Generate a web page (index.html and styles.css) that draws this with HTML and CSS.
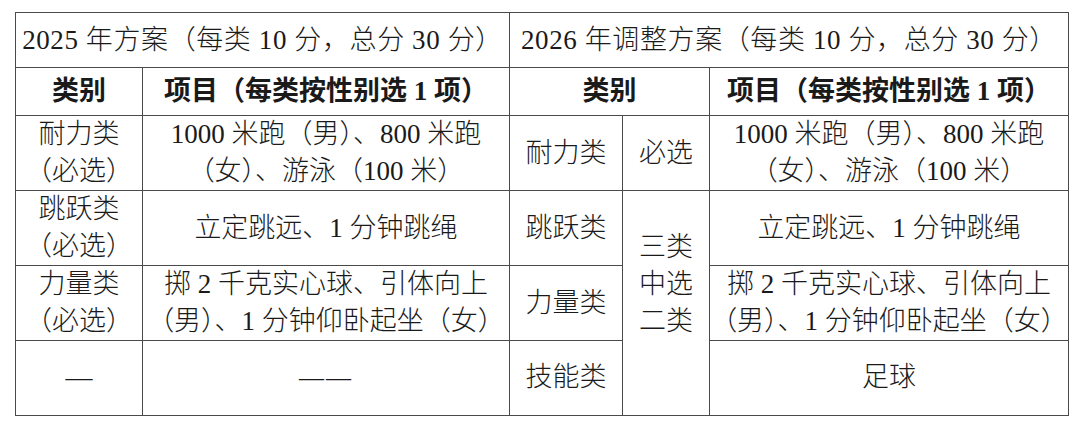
FILE: index.html
```html
<!DOCTYPE html>
<html lang="zh-CN">
<head>
<meta charset="utf-8">
<link rel="stylesheet" href="styles.css">
</head>
<body>
<table class="plan">
  <colgroup>
    <col class="c1"><col class="c2"><col class="c3"><col class="c4"><col class="c5">
  </colgroup>
  <tr class="r-title">
    <td colspan="2">2025 年方案（每类 10 分，总分 30 分）</td>
    <td colspan="3">2026 年调整方案（每类 10 分，总分 30 分）</td>
  </tr>
  <tr class="r-head">
    <td>类别</td>
    <td>项目（每类按性别选 1 项）</td>
    <td colspan="2">类别</td>
    <td>项目（每类按性别选 1 项）</td>
  </tr>
  <tr class="r-body">
    <td>耐力类<br>（必选）</td>
    <td>1000 米跑（男）、800 米跑<br>（女）、游泳（100 米）</td>
    <td>耐力类</td>
    <td>必选</td>
    <td>1000 米跑（男）、800 米跑<br>（女）、游泳（100 米）</td>
  </tr>
  <tr class="r-body">
    <td>跳跃类<br>（必选）</td>
    <td>立定跳远、1 分钟跳绳</td>
    <td>跳跃类</td>
    <td rowspan="3" class="choose">三类<br>中选<br>二类</td>
    <td>立定跳远、1 分钟跳绳</td>
  </tr>
  <tr class="r-body">
    <td>力量类<br>（必选）</td>
    <td>掷 2 千克实心球、引体向上<br>（男）、1 分钟仰卧起坐（女）</td>
    <td>力量类</td>
    <td>掷 2 千克实心球、引体向上<br>（男）、1 分钟仰卧起坐（女）</td>
  </tr>
  <tr class="r-body">
    <td>—</td>
    <td class="dash">——</td>
    <td>技能类</td>
    <td>足球</td>
  </tr>
</table>
</body>
</html>
```
FILE: styles.css
```css
html, body {
  margin: 0;
  padding: 0;
  background: #ffffff;
}
body {
  padding: 12px 0 0 15px;
}
.plan {
  border-collapse: collapse;
  table-layout: fixed;
  width: 1053px;
  font-family: "Liberation Serif", "Noto Sans CJK SC", serif;
  font-size: 27px;
  color: #1a1a1a;
}
.c1 { width: 127px; }
.c2 { width: 367px; }
.c3 { width: 113px; }
.c4 { width: 87px; }
.c5 { width: 359px; }
.plan td {
  border: 1.5px solid #4a4a4a;
  padding: 0;
  text-align: center;
  vertical-align: middle;
  line-height: 37px;
  white-space: nowrap;
  font-weight: 300;
}
.r-title { height: 55px; }
.r-title td { letter-spacing: 0.6px; }
.r-head { height: 48px; }
.r-body { height: 74.5px; }
.r-head td { font-weight: 700; }
.plan td.choose {
  padding-bottom: 36px;
}
.plan td.dash {
  letter-spacing: 2px;
  font-size: 25px;
}
```
